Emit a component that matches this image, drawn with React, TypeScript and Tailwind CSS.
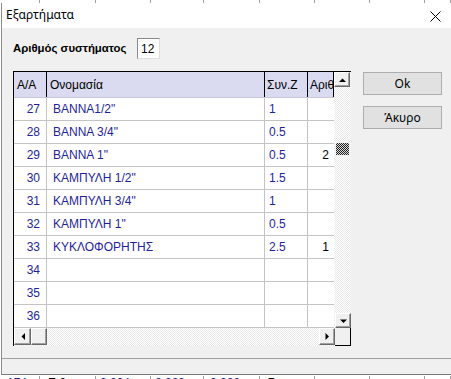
import React from "react";

const rows: { n: number; name: string; z: string; a: string }[] = [
  { n: 27, name: "ΒΑΝΝΑ1/2\"", z: "1", a: "" },
  { n: 28, name: "ΒΑΝΝΑ 3/4\"", z: "0.5", a: "" },
  { n: 29, name: "ΒΑΝΝΑ 1\"", z: "0.5", a: "2" },
  { n: 30, name: "ΚΑΜΠΥΛΗ 1/2\"", z: "1.5", a: "" },
  { n: 31, name: "ΚΑΜΠΥΛΗ 3/4\"", z: "1", a: "" },
  { n: 32, name: "ΚΑΜΠΥΛΗ 1\"", z: "0.5", a: "" },
  { n: 33, name: "ΚΥΚΛΟΦΟΡΗΤΗΣ", z: "2.5", a: "1" },
  { n: 34, name: "", z: "", a: "" },
  { n: 35, name: "", z: "", a: "" },
  { n: 36, name: "", z: "", a: "" },
];

function Arrow({ dir }: { dir: "up" | "down" | "left" | "right" }) {
  const pts =
    dir === "up"
      ? "0,4 7,4 3.5,0.5"
      : dir === "down"
      ? "0,0.5 7,0.5 3.5,4"
      : dir === "left"
      ? "4,0 4,7 0.5,3.5"
      : "0.5,0 0.5,7 4,3.5";
  const w = dir === "up" || dir === "down" ? 7 : 4;
  const h = dir === "up" || dir === "down" ? 4 : 7;
  return (
    <svg width={w} height={h} viewBox={`0 0 ${w} ${h}`}>
      <polygon points={pts} fill="#000" />
    </svg>
  );
}

function SBtn({ dir, className = "" }: { dir?: "up" | "down" | "left" | "right"; className?: string }) {
  return (
    <div
      className={
        "flex items-center justify-center bg-[#f0f0f0] border border-t-white border-l-white border-r-[#696969] border-b-[#696969] shadow-[inset_-1px_-1px_0_#a0a0a0] " +
        className
      }
    >
      {dir && <Arrow dir={dir} />}
    </div>
  );
}

const bgCells = [
  { w: 40, t: "174", c: "text-[#1f1f9a]", al: "text-right pr-[12px]" },
  { w: 56, t: "E 6", c: "text-black", al: "pl-[8px]" },
  { w: 55, t: "0.004", c: "text-[#1f1f9a]", al: "pl-[4px]" },
  { w: 53, t: "0.023", c: "text-[#1f1f9a]", al: "pl-[4px]" },
  { w: 56, t: "0.026", c: "text-[#1f1f9a]", al: "pl-[6px]" },
  { w: 55, t: "7", c: "text-black", al: "pl-[8px]" },
  { w: 55, t: "", c: "", al: "" },
  { w: 55, t: "", c: "", al: "" },
  { w: 26, t: "", c: "", al: "" },
];

export default function App() {
  return (
    <div className="w-[451px] h-[379px] overflow-hidden bg-white flex flex-col font-['Liberation_Sans',Arial,sans-serif] text-[12px]">
      {/* background app, top strip */}
      <div className="h-[3px] overflow-hidden relative">
        <div className="flex -mt-[11px] h-[14px]">
          {bgCells.map((c, i) => (
            <div key={i} style={{ width: c.w }} className={"shrink-0 border-r border-[#a0a0a0] leading-[14px] " + c.c + " " + c.al}>
              {i === 0 ? "173" : c.t}
            </div>
          ))}
        </div>
      </div>

      {/* dialog */}
      <div className="ml-[1px] border-l border-[#8c8c8c] flex flex-col bg-[#f0f0f0]">
        {/* title bar */}
        <div className="h-[25px] bg-white flex items-center justify-between pl-[4px] pr-[10px]">
          <span className="font-['Noto_Sans',sans-serif] text-[12px] text-black leading-none -mt-[1px]">Εξαρτήματα</span>
          <svg width="11" height="11" viewBox="0 0 11 11" className="mt-[1px]">
            <path d="M0.5 0.5 L10.5 10.5 M10.5 0.5 L0.5 10.5" stroke="#000" strokeWidth="1" />
          </svg>
        </div>

        {/* body */}
        <div className="h-[330px] flex">
          <div className="pl-[11px] flex flex-col">
            <div className="flex items-center h-[21px] mt-[10px]">
              <span className="font-bold text-black text-[11.4px] w-[124px] whitespace-nowrap">Αριθμός συστήματος</span>
              <div className="w-[23px] h-[21px] bg-white border border-[#8a8a8a] border-r-[#dcdcdc] border-b-[#dcdcdc] flex items-center pl-[3px] text-black">
                12
              </div>
            </div>

            {/* grid */}
            <div className="mt-[12px] w-[338px] h-[275px] border-l border-t border-black flex flex-col">
              <div className="flex h-[256px]">
                <div className="w-[320px] flex flex-col bg-white">
                  <div className="h-[26px] flex bg-[#dadaf0] border-b border-[#c8c8d8] text-black">
                    <div className="w-[33px] border-r border-black pl-[3px] flex items-center">A/A</div>
                    <div className="w-[218px] border-r border-black pl-[3px] flex items-center">Ονομασία</div>
                    <div className="w-[43px] border-r border-black pl-[2px] flex items-center">Συν.Ζ</div>
                    <div className="w-[26px] border-r border-black pl-[2px] flex items-center overflow-hidden whitespace-nowrap">Αριθ</div>
                  </div>
                  {rows.map((r) => (
                    <div key={r.n} className="h-[23px] flex border-b border-[#c4c4c4] text-[#1f1f9a]">
                      <div className="w-[33px] border-r border-[#c4c4c4] flex items-center justify-end pr-[6px]">{r.n}</div>
                      <div className="w-[218px] border-r border-[#c4c4c4] flex items-center pl-[6px] whitespace-nowrap">{r.name}</div>
                      <div className="w-[43px] border-r border-[#c4c4c4] flex items-center pl-[4px]">{r.z}</div>
                      <div className="w-[26px] flex items-center justify-end pr-[5px] text-black">{r.a}</div>
                    </div>
                  ))}
                </div>
                {/* vertical scrollbar */}
                <div className="w-[17px] flex flex-col bg-[conic-gradient(#ffffff_25%,#e8e8e8_0_50%,#ffffff_0_75%,#e8e8e8_0)] bg-[length:2px_2px]">
                  <SBtn dir="up" className="w-[16px] h-[15px]" />
                  <div className="flex-1 flex flex-col">
                    <div className="h-[56px]" />
                    <div className="ml-[2px] w-[13px] h-[12px] bg-[conic-gradient(#202020_25%,#d8d8d8_0_50%,#202020_0_75%,#d8d8d8_0)] bg-[length:2px_2px]" />
                  </div>
                  <SBtn dir="down" className="ml-[1px] w-[16px] h-[15px]" />
                </div>
              </div>
              {/* horizontal scrollbar */}
              <div className="flex h-[18px]">
                <div className="w-[321px] flex bg-[conic-gradient(#ffffff_25%,#e8e8e8_0_50%,#ffffff_0_75%,#e8e8e8_0)] bg-[length:2px_2px]">
                  <SBtn dir="left" className="w-[17px] h-[17px]" />
                  <SBtn className="w-[16px] h-[17px]" />
                  <div className="flex-1" />
                  <SBtn dir="right" className="w-[16px] h-[17px]" />
                </div>
                <div className="w-[16px] h-[18px] bg-[#f0f0f0] border-r border-b border-black" />
              </div>
            </div>
          </div>

          {/* buttons */}
          <div className="ml-[12px] pt-[44px] flex flex-col gap-[11px] font-['Noto_Sans',sans-serif]">
            <button className="w-[79px] h-[23px] bg-[#e1e1e1] border border-[#adadad] text-[12px] text-black leading-none">
              Ok
            </button>
            <button className="w-[79px] h-[23px] bg-[#e1e1e1] border border-[#adadad] text-[12px] text-black leading-none">
              Άκυρο
            </button>
          </div>
        </div>

        {/* status bar */}
        <div className="h-[16px] border-t border-[#a0a0a0] bg-[#f0f0f0]" />
        <div className="h-[1px] bg-[#7a7a7a]" />
      </div>

      {/* background app, bottom strip */}
      <div className="flex-1 overflow-hidden">
        <div className="flex h-[14px] pt-[1px]">
          {bgCells.map((c, i) => (
            <div key={i} style={{ width: c.w }} className={"shrink-0 border-r border-[#a0a0a0] leading-[14px] " + c.c + " " + c.al}>
              {c.t}
            </div>
          ))}
        </div>
      </div>
    </div>
  );
}
